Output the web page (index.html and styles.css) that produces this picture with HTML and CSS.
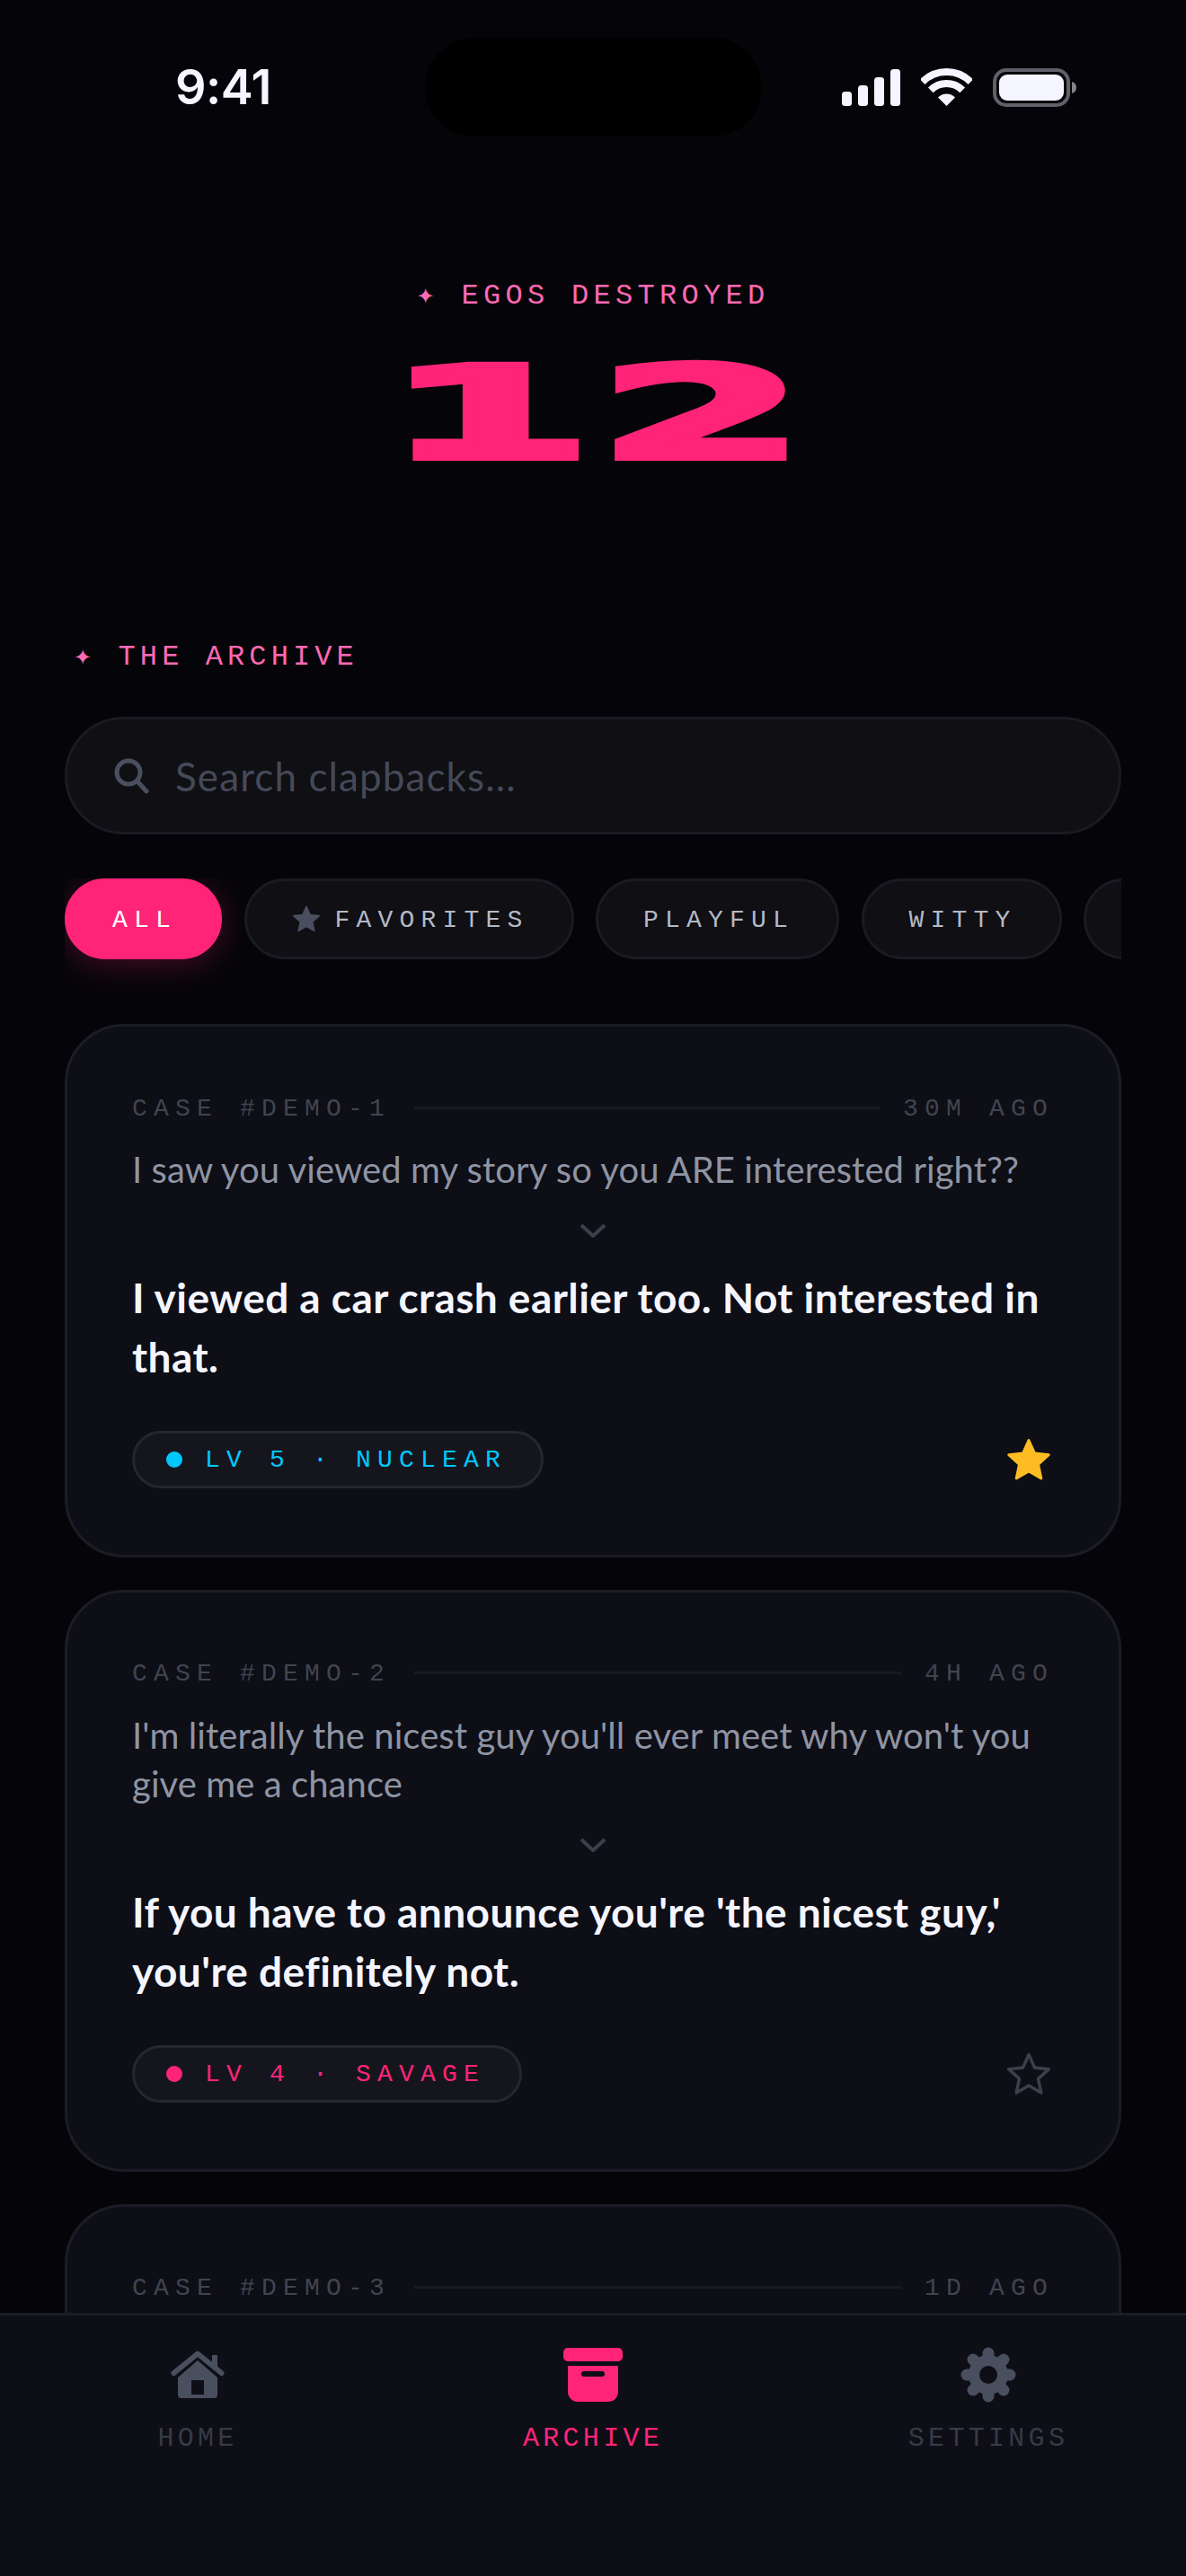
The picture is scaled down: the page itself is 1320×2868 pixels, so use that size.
FILE: index.html
```html
<!DOCTYPE html>
<html lang="en">
<head>
<meta charset="utf-8">
<title>Archive</title>
<link rel="stylesheet" href="styles.css">
</head>
<body>
<div class="screen">
  <main class="content">
    <header class="status">
      <div class="time">9:41</div>
      <div class="island"></div>
      <div class="status-icons">
        <svg class="signal" viewBox="0 0 65 41"><rect x="0" y="25" width="11" height="16" rx="3.5"/><rect x="18" y="18" width="11" height="23" rx="3.5"/><rect x="36" y="9" width="11" height="32" rx="3.5"/><rect x="54" y="0" width="11" height="41" rx="3.5"/></svg>
        <svg class="wifi" viewBox="0 0 57 42"><path class="wifi-arc" d="M1.63 15.13A38 38 0 0 1 55.37 15.13"/><path class="wifi-arc" d="M10.82 24.32A25 25 0 0 1 46.18 24.32"/><path class="wifi-dot" d="M28.5 42L19 32.5A13.4 13.4 0 0 1 38 32.5Z"/></svg>
        <svg class="battery" viewBox="0 0 93 43"><rect class="batt-frame" x="2" y="2" width="82" height="39" rx="13"/><rect class="batt-fill" x="7" y="7" width="72" height="29" rx="9"/><path class="batt-nub" d="M88 15a7 7 0 0 1 5 6.500a7 7 0 0 1-5 6.500Z"/></svg>
      </div>
    </header>

    <section class="hero">
      <div class="hero-label"><span class="spark">✦</span> EGOS DESTROYED</div>
      <div class="hero-num">12</div>
    </section>

    <div class="section-title"><span class="spark">✦</span> THE ARCHIVE</div>

    <div class="search">
      <svg class="search-icon" viewBox="0 0 40 40"><circle cx="16" cy="16" r="13"/><path d="M26 26L36 37"/></svg>
      <span class="search-text">Search clapbacks...</span>
    </div>

    <div class="filters">
      <div class="pill pill-active"><span class="lbl">ALL</span></div>
      <div class="pill"><svg class="pill-star" viewBox="0 0 50 48"><polygon points="25,2.500 31.500,17.100 47.300,18.700 35.500,29.400 38.800,45 25,37 11.200,45 14.500,29.400 2.700,18.700 18.500,17.100"/></svg><span class="lbl">FAVORITES</span></div>
      <div class="pill"><span class="lbl">PLAYFUL</span></div>
      <div class="pill"><span class="lbl">WITTY</span></div>
      <div class="pill pill-cut"></div>
    </div>

    <article class="card">
      <div class="meta"><span class="lbl">CASE #DEMO-1</span><i class="rule"></i><span class="lbl">30M AGO</span></div>
      <p class="msg">I saw you viewed my story so you ARE interested right??</p>
      <svg class="chevron" viewBox="0 0 30 16"><path d="M2 2L15 14L28 2"/></svg>
      <p class="reply">I viewed a car crash earlier too. Not interested in that.</p>
      <div class="card-foot">
        <div class="badge badge-cyan"><i class="dot"></i><span class="lbl">LV 5 · NUCLEAR</span></div>
        <svg class="star star-on" viewBox="0 0 50 48"><polygon points="25,2.500 31.500,17.100 47.300,18.700 35.500,29.400 38.800,45 25,37 11.200,45 14.500,29.400 2.700,18.700 18.500,17.100"/></svg>
      </div>
    </article>

    <article class="card">
      <div class="meta"><span class="lbl">CASE #DEMO-2</span><i class="rule"></i><span class="lbl">4H AGO</span></div>
      <p class="msg">I'm literally the nicest guy you'll ever meet why won't you give me a chance</p>
      <svg class="chevron" viewBox="0 0 30 16"><path d="M2 2L15 14L28 2"/></svg>
      <p class="reply">If you have to announce you're 'the nicest guy,' you're definitely not.</p>
      <div class="card-foot">
        <div class="badge badge-pink"><i class="dot"></i><span class="lbl">LV 4 · SAVAGE</span></div>
        <svg class="star star-off" viewBox="0 0 50 48"><polygon points="25,2.500 31.500,17.100 47.300,18.700 35.500,29.400 38.800,45 25,37 11.200,45 14.500,29.400 2.700,18.700 18.500,17.100"/></svg>
      </div>
    </article>

    <article class="card">
      <div class="meta"><span class="lbl">CASE #DEMO-3</span><i class="rule"></i><span class="lbl">1D AGO</span></div>
    </article>
  </main>

  <nav class="tabs">
    <div class="tab">
      <div class="tab-icon"><svg class="icon-home" viewBox="0 0 60 54"><path class="home-roof" d="M3.500 25L30 3.500L56.500 25"/><rect class="home-chim" x="46" y="5" width="6" height="15"/><path class="home-body" fill-rule="evenodd" d="M8 30L30 11L52 30V49a4 4 0 0 1-4 4H12a4 4 0 0 1-4-4ZM23 33V49H37V33Z"/></svg></div>
      <div class="tab-label">HOME</div>
    </div>
    <div class="tab tab-active">
      <div class="tab-icon"><svg class="icon-archive" viewBox="0 0 66 60"><rect x="0" y="0" width="66" height="15" rx="5"/><path fill-rule="evenodd" d="M5 20H61V49a11 11 0 0 1-11 11H16a11 11 0 0 1-11-11ZM23 26a3 3 0 0 0 0 6H43a3 3 0 0 0 0-6Z"/></svg></div>
      <div class="tab-label">ARCHIVE</div>
    </div>
    <div class="tab">
      <div class="tab-icon"><svg class="icon-gear" viewBox="0 0 62 62"><circle class="gear-ring" cx="31" cy="31" r="16"/><g class="gear-teeth"><path d="M31 7V14"/><path d="M31 48V55"/><path d="M7 31H14"/><path d="M48 31H55"/><path d="M14 14L19 19"/><path d="M48 14L43 19"/><path d="M14 48L19 43"/><path d="M48 48L43 43"/></g></svg></div>
      <div class="tab-label">SETTINGS</div>
    </div>
  </nav>
</div>
</body>
</html>
```

FILE: styles.css
```css
* { box-sizing: border-box; }
html, body { margin: 0; padding: 0; background: #050509; }
.screen {
  width: 1320px;
  height: 2868px;
  display: flex;
  flex-direction: column;
  overflow: hidden;
  font-family: "Liberation Mono", "DejaVu Sans", monospace;
}
.content { flex: 1; min-height: 0; overflow: hidden; padding: 42px 72px 0; }
.lbl { display: block; padding-top: 2px; }

.status { display: grid; grid-template-columns: 1fr 375px 1fr; align-items: center; margin: 0 -72px; height: 110px; }
.time { padding-left: 195px; font: 600 54px/60px Inter, sans-serif; color: #f5f5ff; letter-spacing: -.5px; }
.island { height: 110px; border-radius: 55px; background: #000; }
.status-icons { justify-self: end; margin-right: 122px; display: flex; align-items: center; gap: 23px; }
.signal { width: 65px; height: 41px; fill: #f5f5ff; }
.wifi { width: 57px; height: 42px; }
.wifi-arc { fill: none; stroke: #f5f5ff; stroke-width: 8; }
.wifi-dot { fill: #f5f5ff; }
.battery { width: 93px; height: 43px; }
.batt-frame { fill: none; stroke: #5f6068; stroke-width: 4; }
.batt-fill { fill: #f5f5ff; }
.batt-nub { fill: #84858c; }

.hero { padding-top: 160px; text-align: center; }
.hero-label { font-size: 32px; line-height: 36px; letter-spacing: 5.300px; color: #ff69b4; }
.spark { font-family: "DejaVu Sans", sans-serif; font-size: 24px; }
.hero-num {
  height: 210px;
  margin-top: 8px;
  padding-left: 4px;
  font: 700 143px/210px "DejaVu Sans", sans-serif;
  color: #ff2478;
  -webkit-text-stroke: 6px #ff2478;
  transform: scaleX(2.340);
  letter-spacing: 2px;
}

.section-title { margin-top: 148px; padding-left: 10px; font-size: 32px; line-height: 36px; letter-spacing: 5.100px; color: #ff69b4; }

.search {
  margin-top: 48px;
  height: 131px;
  padding-left: 52px;
  display: flex;
  align-items: center;
  gap: 28px;
  background: #0f0f14;
  border: 3px solid #1a1a22;
  border-radius: 66px;
}
.search-icon { width: 40px; height: 40px; fill: none; stroke: #4a4f5f; stroke-width: 5; stroke-linecap: round; }
.search-text { font: 400 44px/54px Lato, sans-serif; letter-spacing: 1.100px; color: #454958; }

.filters { margin: 49px 0 0; padding-bottom: 72px; display: flex; gap: 24.500px; overflow: hidden; }
.pill {
  flex: none;
  height: 90px;
  padding: 0 47px 0 50px;
  display: flex;
  align-items: center;
  gap: 16px;
  font-size: 28px;
  letter-spacing: 7.200px;
  color: #b4b9c6;
  background: #0f0f14;
  border: 3px solid #1a1a22;
  border-radius: 45px;
}
.pill-cut { width: 150px; }
.pill-active { color: #fff; background: #ff2478; border-color: #ff2478; box-shadow: 0 6px 36px rgba(255, 36, 120, .25); }
.pill-star { width: 32px; height: 30px; fill: #4a4f5f; stroke: #4a4f5f; stroke-width: 3; stroke-linejoin: round; }

.card {
  margin-bottom: 36px;
  padding: 72px 72px 74px;
  background: #0d0e16;
  border: 3px solid #1c1d24;
  border-radius: 66px;
}
.meta { height: 36px; display: flex; align-items: center; gap: 26px; font-size: 28px; letter-spacing: 7.200px; color: #41444f; }
.rule { flex: 1; height: 3px; background: #191a21; }
.msg { margin: 24px 0 0; font: 400 40px/54.600px Lato, sans-serif; letter-spacing: .08px; color: #8f94a3; }
.chevron { display: block; width: 30px; height: 16px; margin: 32px auto 0; fill: none; stroke: #3c3f4c; stroke-width: 4; }
.reply { margin: 34px 0 0; font: 700 46px/66px Lato, sans-serif; letter-spacing: .45px; color: #f5f5ff; }
.card-foot { margin-top: 49px; display: flex; align-items: center; justify-content: space-between; }
.badge {
  height: 64px;
  padding: 0 38px 0 35px;
  display: inline-flex;
  align-items: center;
  gap: 25px;
  font-size: 28px;
  letter-spacing: 7.200px;
  background: #15161d;
  border: 3px solid #25262e;
  border-radius: 32px;
}
.dot { width: 18px; height: 18px; border-radius: 50%; background: currentColor; }
.badge-cyan { color: #00c8ff; }
.badge-pink { color: #ff2478; }
.star { width: 50px; height: 48px; margin-right: 3px; stroke-linejoin: round; }
.star-on { fill: #fdbc22; stroke: #fdbc22; stroke-width: 3; }
.star-off { fill: none; stroke: #3c3f4c; stroke-width: 3.500; }

.tabs {
  flex: none;
  height: 293px;
  padding-top: 34px;
  display: grid;
  grid-template-columns: repeat(3, 1fr);
  align-items: start;
  background: #0d0e16;
  border-top: 3px solid #1c1d24;
}
.tab { display: flex; flex-direction: column; align-items: center; gap: 22px; color: #4a4f5f; }
.tab-icon { height: 63px; display: flex; align-items: center; }
.tab-label { font-size: 30px; line-height: 36px; letter-spacing: 4.300px; color: #383a46; }
.tab-active { color: #ff2478; }
.tab-active .tab-label { color: #ff2478; }
.icon-home { width: 60px; height: 54px; }
.home-roof { fill: none; stroke: currentColor; stroke-width: 6; stroke-linecap: round; stroke-linejoin: round; }
.home-chim, .home-body { fill: currentColor; }
.icon-archive { width: 66px; height: 60px; fill: currentColor; }
.icon-gear { width: 62px; height: 62px; }
.gear-ring { fill: none; stroke: currentColor; stroke-width: 12; }
.gear-teeth path { fill: none; stroke: currentColor; stroke-width: 13; stroke-linecap: round; }
```
